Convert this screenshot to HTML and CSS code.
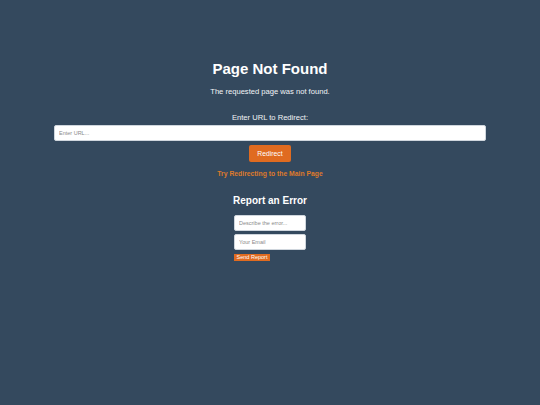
FILE: index.html
```html
<!DOCTYPE html>
<html>
<head>
<meta charset="utf-8">
<link rel="stylesheet" href="styles.css">
</head>
<body>
<main class="page">
  <h1 class="title">Page Not Found</h1>
  <p class="subtitle">The requested page was not found.</p>
  <label class="label" for="url">Enter URL to Redirect:</label>
  <input class="url-input" id="url" type="text" placeholder="Enter URL...">
  <button class="redirect-btn">Redirect</button>
  <a class="main-link" href="#">Try Redirecting to the Main Page</a>
  <h2 class="report-title">Report an Error</h2>
  <form class="report-form">
    <input class="small-input" type="text" placeholder="Describe the error...">
    <input class="small-input" type="text" placeholder="Your Email">
    <button class="send-btn" type="button">Send Report</button>
  </form>
</main>
</body>
</html>
```
FILE: styles.css
```css
html, body {
  margin: 0;
  padding: 0;
  background: #34495e;
  height: 100%;
}
body {
  font-family: "Liberation Sans", Arial, sans-serif;
  color: #ffffff;
}
.page {
  display: flex;
  flex-direction: column;
  align-items: center;
  padding: 60px 54px 0;
}
.title {
  margin: 0;
  font-size: 15px;
  line-height: 17px;
  font-weight: bold;
}
.subtitle {
  margin: 10px 0 0;
  font-size: 7.6px;
  line-height: 10px;
  color: #f2f4f6;
}
.label {
  margin-top: 16px;
  font-size: 7.6px;
  line-height: 10px;
  color: #f2f4f6;
}
.url-input {
  box-sizing: border-box;
  margin: 2px 0 0;
  width: 100%;
  height: 16px;
  border: 1px solid #cfd6dd;
  border-radius: 2px;
  background: #ffffff;
  padding: 0 4px;
  font-family: "Liberation Sans", Arial, sans-serif;
  font-size: 5.5px;
  outline: none;
}
.url-input::placeholder, .small-input::placeholder {
  color: #8a8a8a;
}
.redirect-btn {
  margin-top: 4px;
  width: 42px;
  height: 17px;
  padding: 0;
  border: none;
  border-radius: 2px;
  background: #e06b20;
  color: #ffffff;
  font-family: "Liberation Sans", Arial, sans-serif;
  font-size: 6.8px;
}
.main-link {
  margin-top: 7px;
  font-size: 6.8px;
  line-height: 9px;
  font-weight: bold;
  color: #df7a2b;
  text-decoration: none;
}
.report-title {
  margin: 17px 0 0;
  font-size: 10px;
  line-height: 12px;
  font-weight: bold;
}
.report-form {
  display: flex;
  flex-direction: column;
  align-items: flex-start;
  gap: 3px;
  margin-top: 8px;
}
.small-input {
  box-sizing: border-box;
  width: 72px;
  height: 16px;
  margin: 0;
  border: 1px solid #cfd6dd;
  border-radius: 2px;
  background: #ffffff;
  padding: 0 4px;
  font-family: "Liberation Sans", Arial, sans-serif;
  font-size: 5.5px;
  outline: none;
}
.send-btn {
  margin-top: 1px;
  width: 36px;
  height: 7px;
  padding: 0;
  border: none;
  border-radius: 0;
  background: #e06b20;
  color: #ffffff;
  font-family: "Liberation Sans", Arial, sans-serif;
  font-size: 5.5px;
  line-height: 7px;
}
```
